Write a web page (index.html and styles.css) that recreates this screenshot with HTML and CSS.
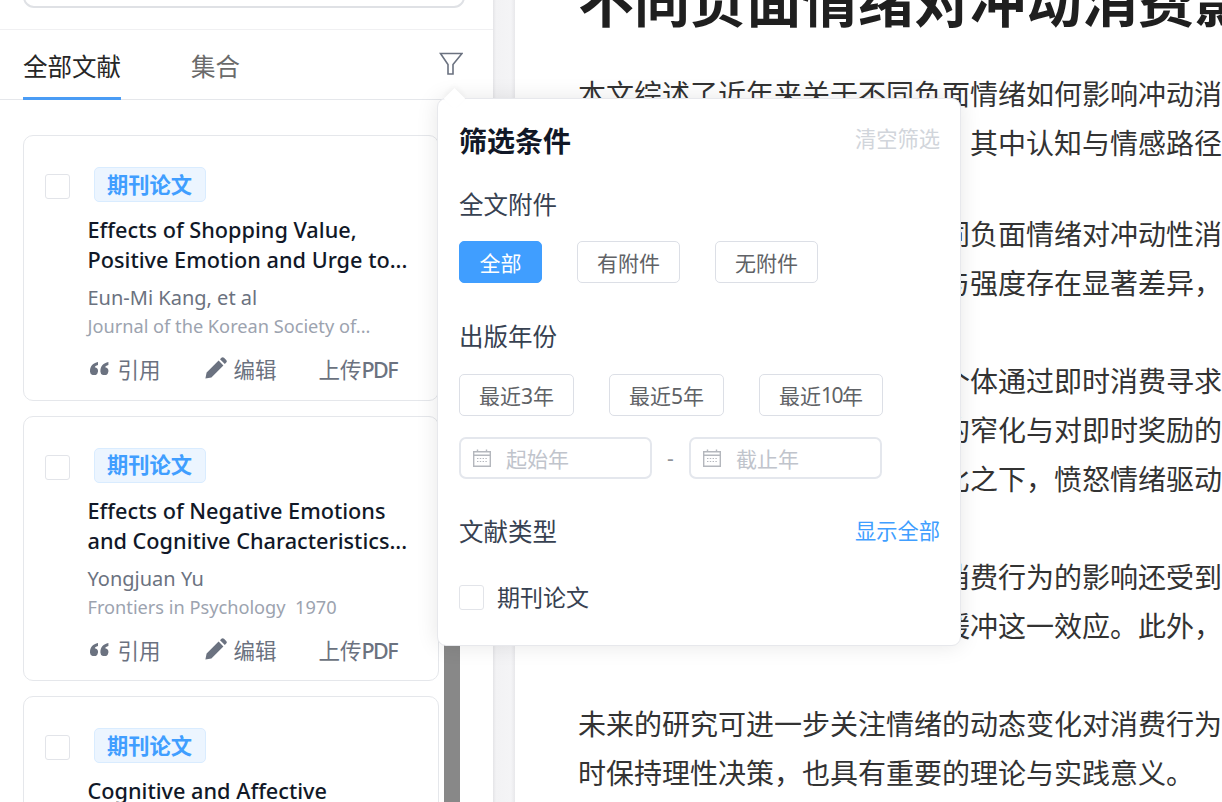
FILE: index.html
```html
<!DOCTYPE html>
<html lang="zh-CN">
<head>
<meta charset="utf-8">
<title>文献筛选</title>
<link rel="stylesheet" href="styles.css">
</head>
<body>
<div class="app">
  <aside class="sidebar">
    <div class="search-wrap"><div class="search"></div></div>
    <div class="tabs">
      <div class="tab tab-active">全部文献</div>
      <div class="tab">集合</div>
      <div class="filter-anchor">
        <svg class="filter-icon" viewBox="0 0 24 24" width="24" height="24"><path d="M1.5 2.5H23L14 13.5V23H9V13.5Z"/></svg>
        <div class="popover">
          <div class="popover-arrow"></div>
          <div class="row-between">
            <div class="popover-title">筛选条件</div>
            <div class="link-muted">清空筛选</div>
          </div>
          <div class="section-label first">全文附件</div>
          <div class="btn-row">
            <div class="btn btn-primary">全部</div>
            <div class="btn">有附件</div>
            <div class="btn">无附件</div>
          </div>
          <div class="section-label year">出版年份</div>
          <div class="btn-row">
            <div class="btn">最近3年</div>
            <div class="btn">最近5年</div>
            <div class="btn">最近<span class="num-tight">10</span>年</div>
          </div>
          <div class="date-row">
            <div class="date-input">
              <svg class="cal-icon" viewBox="0 0 18 18" width="18" height="18"><path d="M.7 2.7h16.6v14.6H.7zM.7 6.2h16.6M4.5 .5v3M13.5 .5v3"/><path class="cal-dots" d="M4 9.5h10M4 12.5h10"/></svg>
              <span>起始年</span>
            </div>
            <div class="date-sep">-</div>
            <div class="date-input">
              <svg class="cal-icon" viewBox="0 0 18 18" width="18" height="18"><path d="M.7 2.7h16.6v14.6H.7zM.7 6.2h16.6M4.5 .5v3M13.5 .5v3"/><path class="cal-dots" d="M4 9.5h10M4 12.5h10"/></svg>
              <span>截止年</span>
            </div>
          </div>
          <div class="row-between type-row">
            <div class="section-label plain">文献类型</div>
            <div class="link-blue">显示全部</div>
          </div>
          <div class="check-row">
            <span class="checkbox"></span>
            <span class="check-label">期刊论文</span>
          </div>
        </div>
      </div>
    </div>
    <div class="list-wrap">
      <div class="cards">
        <article class="card">
          <div class="card-head"><span class="checkbox card-check"></span><span class="tag">期刊论文</span></div>
          <div class="card-body">
            <div class="card-title">Effects of Shopping Value,<br>Positive Emotion and Urge to...</div>
            <div class="card-author">Eun-Mi Kang, et al</div>
            <div class="card-journal">Journal of the Korean Society of...</div>
            <div class="actions">
              <span class="action"><svg class="quote" viewBox="0 0 19 13" width="19" height="13"><path d="M0 9C0 4 3 1 8 0V3C6 3.4 5 4.4 4.8 5.3A4 4 0 1 1 0 9Z"/><path d="M10.4 9C10.4 4 13.4 1 18.4 0V3C16.4 3.4 15.4 4.4 15.2 5.3A4 4 0 1 1 10.4 9Z"/></svg>引用</span>
              <span class="action"><svg class="pencil" viewBox="0 0 22 22" width="22" height="22"><path d="M.4 21.6 1.6 15.6 13.6 3.6 18.4 8.4 6.4 20.4ZM15 2.2 16.4.8A1.9 1.9 0 0 1 19 .8L21.2 3A1.9 1.9 0 0 1 21.2 5.6L19.8 7Z"/></svg>编辑</span>
              <span class="action">上传<span class="pdf">PDF</span></span>
            </div>
          </div>
        </article>
        <article class="card">
          <div class="card-head"><span class="checkbox card-check"></span><span class="tag">期刊论文</span></div>
          <div class="card-body">
            <div class="card-title">Effects of Negative Emotions<br>and Cognitive Characteristics...</div>
            <div class="card-author">Yongjuan Yu</div>
            <div class="card-journal">Frontiers in Psychology&nbsp; 1970</div>
            <div class="actions">
              <span class="action"><svg class="quote" viewBox="0 0 19 13" width="19" height="13"><path d="M0 9C0 4 3 1 8 0V3C6 3.4 5 4.4 4.8 5.3A4 4 0 1 1 0 9Z"/><path d="M10.4 9C10.4 4 13.4 1 18.4 0V3C16.4 3.4 15.4 4.4 15.2 5.3A4 4 0 1 1 10.4 9Z"/></svg>引用</span>
              <span class="action"><svg class="pencil" viewBox="0 0 22 22" width="22" height="22"><path d="M.4 21.6 1.6 15.6 13.6 3.6 18.4 8.4 6.4 20.4ZM15 2.2 16.4.8A1.9 1.9 0 0 1 19 .8L21.2 3A1.9 1.9 0 0 1 21.2 5.6L19.8 7Z"/></svg>编辑</span>
              <span class="action">上传<span class="pdf">PDF</span></span>
            </div>
          </div>
        </article>
        <article class="card">
          <div class="card-head"><span class="checkbox card-check"></span><span class="tag">期刊论文</span></div>
          <div class="card-body">
            <div class="card-title">Cognitive and Affective</div>
          </div>
        </article>
      </div>
      <div class="scrollbar"></div>
    </div>
  </aside>
  <div class="gutter"></div>
  <main class="doc">
    <h1 class="doc-title">不同负面情绪对冲动消费影响的研究综述</h1>
    <p class="para para-first">本文综述了近年来关于不同负面情绪如何影响冲动消<br>费行为的机制与相关实证研究。其中认知与情感路径</p>
    <p class="para">研究普遍显示&#xFF0C;本文讨论的不同负面情绪对冲动性消<br>费行为的影响机制、作用方向与强度存在显著差异&#xFF0C;</p>
    <p class="para">悲伤情绪主要通过情绪修复使个体通过即时消费寻求<br>安慰&#xFF0C;焦虑情绪则与注意范围的窄化与对即时奖励的<br>偏好的增强密切相关。两者相比之下&#xFF0C;愤怒情绪驱动</p>
    <p class="para">的冲动决策。负面情绪对冲动消费行为的影响还受到<br>个体差异与情境调节&#xFF0C;正念可缓冲这一效应。此外&#xFF0C;</p>
    <p class="para">未来的研究可进一步关注情绪的动态变化对消费行为<br>时保持理性决策&#xFF0C;也具有重要的理论与实践意义。</p>
  </main>
</div>
</body>
</html>
```
FILE: styles.css
```css
* { box-sizing: border-box; }
html, body { margin: 0; height: 802px; overflow: hidden; background: #fff; }
body { font-family: "Noto Sans", "Noto Sans CJK SC", sans-serif; color: #1f2937; }
.app { display: flex; width: 1222px; height: 802px; overflow: hidden; }

.sidebar { width: 493px; flex: none; background: #fff; display: flex; flex-direction: column; }
.search-wrap { height: 30px; border-bottom: 1px solid #f0f0f2; padding: 0 28px 0 23px; overflow: hidden; }
.search { height: 40px; margin-top: -32px; border: 2px solid #dfe1e5; border-radius: 11px; }

.tabs { height: 70px; flex: none; display: flex; gap: 70px; padding-left: 23px; border-bottom: 1px solid #e5e7eb; }
.tab { font-size: 24.5px; line-height: 34px; padding-top: 20px; height: 70px; color: #6b6b6b; }
.tab-active { color: #262626; border-bottom: 3px solid #4a9cf5; }
.filter-anchor { position: relative; margin-left: auto; width: 55px; }
.filter-icon { display: block; margin-top: 21px; margin-left: 1px; fill: none; stroke: #6b7280; stroke-width: 1.6; }

.popover { position: absolute; left: -1px; top: 68px; z-index: 5; width: 524px; height: 548px; padding: 25px 20px 0 21px; background: #fff; border: 1px solid #e7e8ec; border-radius: 9px; box-shadow: 0 0 21px rgba(0, 0, 0, .1); }
.popover-arrow { position: absolute; left: 9px; top: -8px; width: 15px; height: 15px; background: #fff; transform: rotate(45deg); box-shadow: -2px -2px 5px rgba(0, 0, 0, .04); }
.row-between { position: relative; display: flex; justify-content: space-between; align-items: center; }
.popover-title { font-size: 28px; line-height: 34px; font-weight: 700; color: #111827; }
.link-muted { margin-top: -4px; font-size: 21.25px; line-height: 30px; color: #d1d5db; }
.link-blue { margin-top: -2px; font-size: 21.25px; line-height: 30px; color: #409eff; }
.section-label { font-size: 24.5px; line-height: 34px; color: #374151; }
.section-label.first { margin-top: 30px; }
.section-label.year { margin-top: 37px; }
.btn-row { display: flex; gap: 35px; margin-top: 19px; }
.btn { height: 42px; padding: 0 19px; display: flex; align-items: center; font-size: 21px; color: #606266; background: #fff; border: 1px solid #dcdfe6; border-radius: 5px; }
.btn-primary { padding: 0 19.5px; color: #fff; background: #409eff; border-color: #409eff; }
.num-tight { letter-spacing: -1.5px; }
.year + .btn-row { margin-top: 20px; }
.date-row { display: flex; align-items: center; margin-top: 21px; }
.date-input { width: 193px; height: 42px; display: flex; align-items: center; gap: 15px; padding-left: 12px; font-size: 21px; color: #c0c4cc; border: 2px solid #e4e7ed; border-radius: 7px; }
.date-sep { width: 37px; text-align: center; font-size: 21px; color: #909399; }
.cal-icon { flex: none; fill: none; stroke: #b4b7bd; stroke-width: 1.4; }
.cal-dots { stroke-width: 1.2; stroke-dasharray: 1.4 1.4; }
.type-row { margin-top: 36px; }
.check-row { display: flex; align-items: center; gap: 13px; margin-top: 31px; height: 34px; }
.check-label { font-size: 23px; line-height: 34px; color: #374151; }
.checkbox { display: block; flex: none; width: 25px; height: 25px; background: #fff; border: 1px solid #e2e4e9; border-radius: 3px; }

.list-wrap { flex: 1; min-height: 0; display: flex; gap: 5px; padding-left: 23px; overflow: hidden; }
.cards { width: 416px; flex: none; padding-top: 35px; display: flex; flex-direction: column; gap: 15px; }
.scrollbar { width: 16px; flex: none; background: #888; }
.card { flex: none; padding: 31px 21px 15.5px; background: #fff; border: 1px solid #e5e7eb; border-radius: 10px; }
.card-head { display: flex; align-items: flex-start; gap: 24px; }
.card-check { margin-top: 7px; }
.tag { height: 35px; padding: 0 13px 0 12px; display: flex; align-items: center; font-size: 21.25px; line-height: 34px; font-weight: 700; color: #409eff; background: #ecf5ff; border: 1px solid #d9ecff; border-radius: 5px; }
.card-body { margin-left: 42.5px; }
.card-title { margin-top: 13px; font-size: 21.7px; line-height: 30px; font-weight: 500; color: #111827; white-space: nowrap; }
.card-author { margin-top: 8px; font-size: 20px; line-height: 30px; color: #6b7280; }
.card-journal { margin-top: 0; font-size: 18.2px; line-height: 26px; color: #9ca3af; }
.actions { margin-top: 17px; padding-left: 2px; display: flex; gap: 42px; }
.action { display: flex; align-items: center; gap: 9px; height: 28px; font-size: 21.5px; line-height: 28px; color: #6b7280; white-space: nowrap; }
.pdf { margin-left: -9px; font-weight: 500; letter-spacing: -1.6px; }
.quote, .pencil { flex: none; fill: #6b7280; }
.quote { margin-top: -3px; }
.pencil { margin-top: -4px; margin-right: -2px; margin-left: 2px; }

.gutter { width: 22px; flex: none; background: linear-gradient(90deg, #e4e4e7 0, #f2f2f4 3px, #f4f4f6 18px, #e8e8eb 22px); }
.doc { flex: 1; min-width: 0; padding-left: 63px; background: #fff; overflow: hidden; white-space: nowrap; }
.doc-title { margin: -35px 0 0; font-size: 56px; line-height: 70px; font-weight: 700; color: #1f1f1f; }
.para { margin: 0 0 49px; font-size: 28px; line-height: 49px; color: #333; }
.doc-title + .para { margin-top: 35px; }
.para-first { margin-bottom: 42px; }
```
